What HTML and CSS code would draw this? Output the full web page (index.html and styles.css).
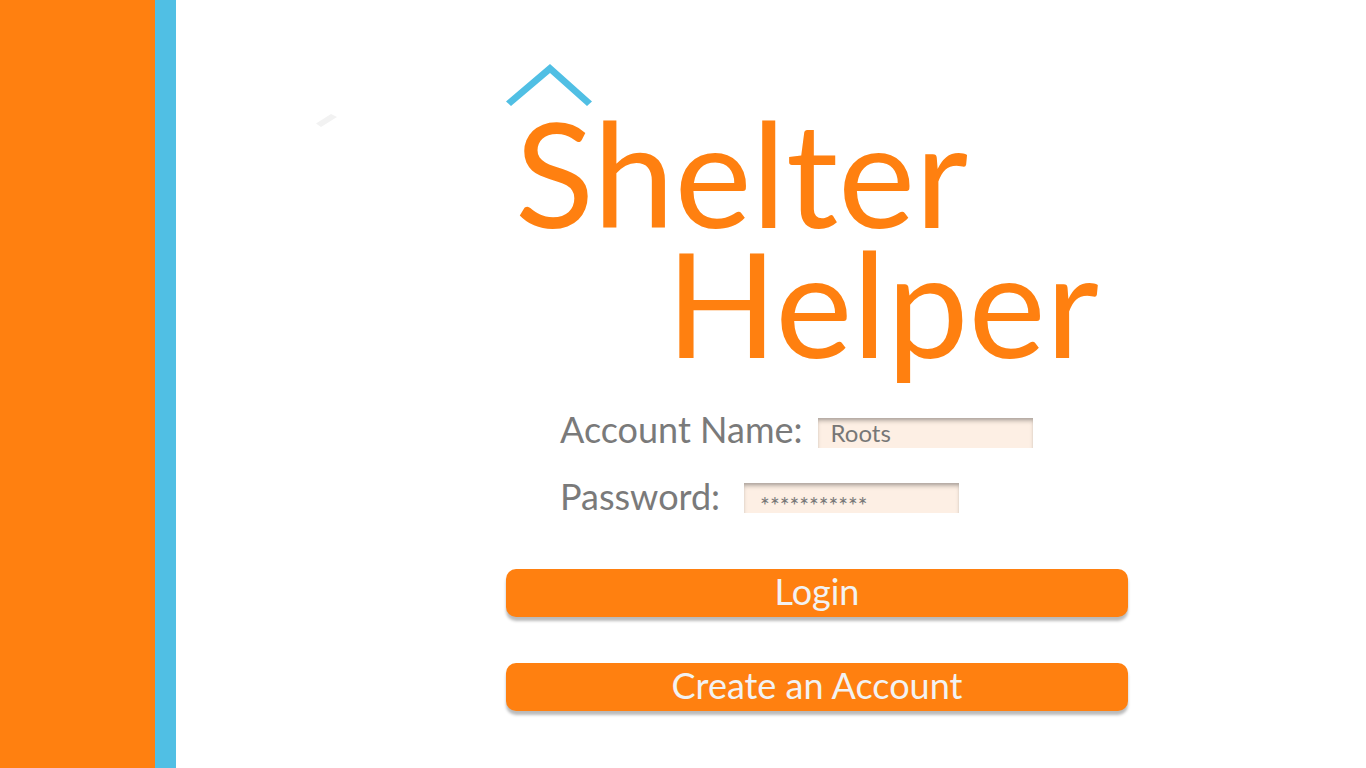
FILE: index.html
```html
<!DOCTYPE html>
<html lang="en">
<head>
<meta charset="utf-8">
<title>Shelter Helper</title>
<link rel="stylesheet" href="styles.css">
</head>
<body>
<div class="page">
  <aside class="rail"></aside>
  <div class="margin">
    <svg class="mark" width="21" height="13" viewBox="0 0 21 13" aria-hidden="true"><path d="M0 9.500 L15 0 L21 3 L5 13 Z" fill="#f2f2f2"/></svg>
  </div>
  <main class="content">
    <header class="brand">
      <svg class="roof" width="86" height="43" viewBox="0 0 86 43" aria-hidden="true"><path d="M0 37.500 L44 0 L86 37.500 L81 42 L44 9 L5 42 Z" fill="#50bfe4"/></svg>
      <h1 class="title"><span class="line">Shelter</span><span class="line second">Helper</span></h1>
    </header>
    <form class="form">
      <div class="field">
        <label for="account">Account Name:</label>
        <input id="account" class="input" type="text" value="Roots">
      </div>
      <div class="field password">
        <label for="password">Password:</label>
        <input id="password" class="input stars" type="text" value="***********" autocomplete="off">
      </div>
      <button class="button" type="button">Login</button>
      <button class="button" type="button">Create an Account</button>
    </form>
  </main>
</div>
</body>
</html>
```
FILE: styles.css
```css
* {
  box-sizing: border-box;
}

body {
  margin: 0;
  background: #fff;
  font-family: Lato, sans-serif;
}

.page {
  display: grid;
  grid-template-columns: 176px 330px minmax(0, 622px);
  min-height: 100vh;
}

.rail {
  background: #ff8010;
  border-right: 21px solid #50bfe4;
}

.margin {
  padding: 114px 0 0 140px;
}

.mark,
.roof {
  display: block;
}

.content {
  padding-top: 64px;
}

.title {
  margin: 0;
  padding-left: 9px;
  color: #ff8010;
  font-size: 146px;
  font-weight: 400;
  line-height: 130px;
}

.line {
  display: block;
}

.second {
  padding-left: 151px;
}

.form {
  padding-top: 40px;
}

.field {
  display: flex;
  align-items: center;
  gap: 15px;
  height: 44px;
  padding-left: 54px;
  color: #7a7a7a;
  font-size: 36px;
}

.password {
  gap: 24px;
  margin: 23px 0 51px;
}

.input {
  width: 215px;
  height: 30px;
  margin: 8px 0 0;
  padding: 0 13px 2px;
  border: 0;
  background: #fdefe4;
  box-shadow: inset 0 4px 4px -1px rgba(0, 0, 0, 0.26), inset 0 2px 2px rgba(0, 0, 0, 0.06);
  color: #777;
  font: 24px Lato, sans-serif;
}

.stars {
  margin-top: 4px;
  padding: 14px 16px 0;
  font-size: 23px;
}

.button {
  display: block;
  width: 100%;
  height: 48px;
  margin: 0 0 46px;
  padding: 0 0 4px;
  border: 0;
  border-radius: 10px;
  background: #ff8010;
  box-shadow: 0 4px 3px rgba(0, 0, 0, 0.27);
  color: #f2f2f2;
  font: 36px/44px Lato, sans-serif;
}

.button:last-child {
  margin-bottom: 0;
}
```
